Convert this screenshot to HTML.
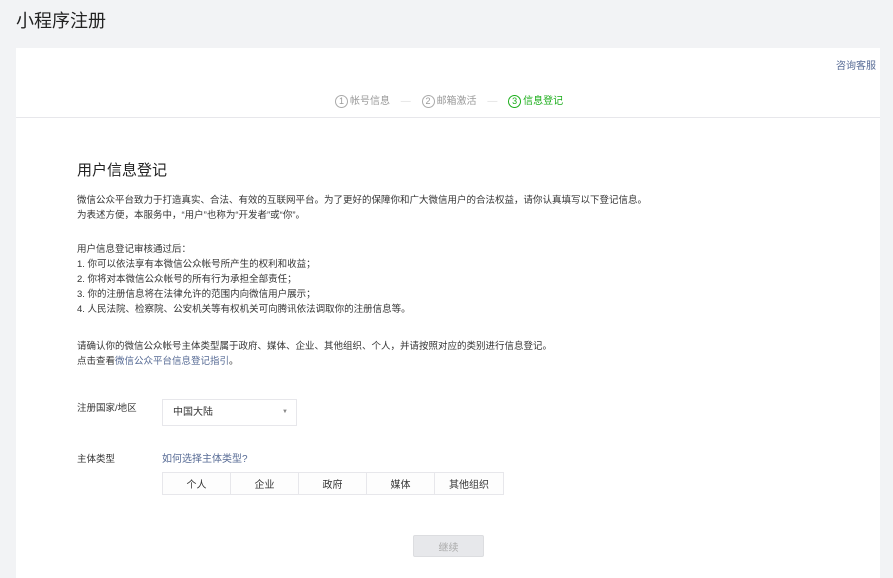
<!DOCTYPE html>
<html><head><meta charset="utf-8"><style>
*{margin:0;padding:0;box-sizing:border-box}
body{width:893px;height:568px;overflow:hidden;background:#f2f3f5;font-family:"Liberation Sans","Noto Sans CJK SC",sans-serif;color:#353535;position:relative}
.abs{position:absolute;white-space:nowrap}
h1{position:absolute;left:16px;top:7px;font-size:18px;font-weight:normal;color:#222}
.card{position:absolute;left:16px;top:48px;width:864px;height:530px;background:#fff}
.t{font-size:9.5px;color:#353535;line-height:15px}
a{color:#576b95;text-decoration:none}
.step{font-size:10px;color:#999}
.c{display:inline-block;width:13px;height:13px;border:1px solid #aaa;border-radius:50%;text-align:center;line-height:11px;font-size:9px;vertical-align:middle;margin-right:2px}
.tabs{position:absolute;left:162px;top:472px;display:flex;border:1px solid #e7e7eb}
.tabs div{width:68px;height:21px;display:flex;align-items:center;justify-content:center;font-size:10px;border-right:1px solid #e7e7eb;background:#fdfdfd}
.tabs div:last-child{border-right:none}
</style></head><body>
<h1>小程序注册</h1>
<div class="card"></div>
<a class="abs" style="left:836px;top:57px;font-size:10px">咨询客服</a>
<div class="abs step" style="left:335px;top:92px"><span class="c">1</span>帐号信息 <span style="color:#ddd;margin:0 8px">—</span> <span class="c">2</span>邮箱激活 <span style="color:#ddd;margin:0 8px">—</span> <span class="c" style="border-color:#1aad19;color:#1aad19">3</span><span style="color:#1aad19">信息登记</span></div>
<div class="abs" style="left:16px;top:117px;width:864px;height:1px;background:#e7e7eb"></div>
<div class="abs" style="left:77px;top:159px;font-size:15px;color:#222">用户信息登记</div>
<div class="abs t" style="left:77px;top:193px">微信公众平台致力于打造真实、合法、有效的互联网平台。为了更好的保障你和广大微信用户的合法权益，请你认真填写以下登记信息。<br>为表述方便，本服务中，“用户”也称为“开发者”或“你”。</div>
<div class="abs t" style="left:77px;top:242px">用户信息登记审核通过后：<br>1. 你可以依法享有本微信公众帐号所产生的权利和收益；<br>2. 你将对本微信公众帐号的所有行为承担全部责任；<br>3. 你的注册信息将在法律允许的范围内向微信用户展示；<br>4. 人民法院、检察院、公安机关等有权机关可向腾讯依法调取你的注册信息等。</div>
<div class="abs t" style="left:77px;top:339px">请确认你的微信公众帐号主体类型属于政府、媒体、企业、其他组织、个人，并请按照对应的类别进行信息登记。<br>点击查看<a>微信公众平台信息登记指引</a>。</div>
<div class="abs t" style="left:77px;top:401px">注册国家/地区</div>
<div class="abs" style="left:162px;top:399px;width:135px;height:27px;border:1px solid #e7e7eb;font-size:10px;line-height:25px;padding-left:10px">中国大陆<span style="position:absolute;right:8px;font-size:6px;color:#888">▼</span></div>
<div class="abs t" style="left:77px;top:452px">主体类型</div>
<a class="abs" style="left:162px;top:452px;font-size:10px;line-height:15px">如何选择主体类型?</a>
<div class="tabs"><div>个人</div><div>企业</div><div>政府</div><div>媒体</div><div>其他组织</div></div>
<div class="abs" style="left:413px;top:535px;width:71px;height:22px;background:#e7e8eb;border:1px solid #dcdde0;border-radius:2px;display:flex;align-items:center;justify-content:center;font-size:10px;color:#aaa">继续</div>
</body></html>
